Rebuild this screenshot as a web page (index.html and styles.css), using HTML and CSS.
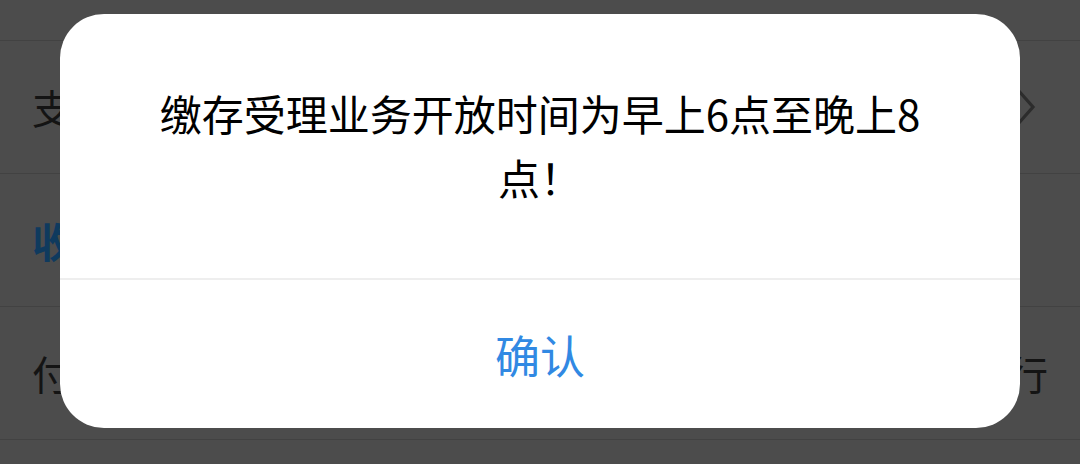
FILE: index.html
```html
<!DOCTYPE html>
<html lang="zh-CN">
<head>
<meta charset="utf-8">
<title>提示</title>
<link rel="stylesheet" href="styles.css">
</head>
<body>
<div class="page">
  <div class="row stub"></div>
  <div class="row">
    <span class="label">支取方式</span>
    <svg class="chevron" width="20" height="38" viewBox="0 0 20 38"><path d="M2 2 L17 19 L2 36" fill="none" stroke="#2c2c2c" stroke-width="3.2"/></svg>
  </div>
  <div class="row">
    <span class="label section">收款人信息</span>
  </div>
  <div class="row">
    <span class="label">付款银行</span>
    <span class="value">中国建设银行</span>
  </div>
  <div class="row rest"></div>
</div>
<div class="dialog">
  <div class="message">缴存受理业务开放时间为早上6点至晚上8点！</div>
  <div class="actions">
    <button class="confirm">确认</button>
  </div>
</div>
</body>
</html>
```

FILE: styles.css
```css
html, body {
  margin: 0;
  padding: 0;
  width: 1080px;
  height: 464px;
  overflow: hidden;
  background: #4c4c4c;
  font-family: "Noto Sans CJK SC", "Noto Sans", sans-serif;
}

.page {
  display: flex;
  flex-direction: column;
  height: 464px;
  overflow: hidden;
}

.row {
  flex: none;
  height: 132px;
  border-bottom: 1px solid #424242;
  display: flex;
  align-items: center;
  justify-content: space-between;
  padding: 0 32px 0 32px;
}

.row.stub {
  height: 40px;
}

.row.rest {
  height: 22px;
  border-bottom: none;
}

.label {
  font-size: 40px;
  color: #141414;
}

.label.section {
  color: #0f3a5e;
  font-weight: 700;
  font-size: 41px;
}

.value {
  font-size: 40px;
  color: #141414;
}

.chevron {
  margin-right: 12px;
}

.dialog {
  position: absolute;
  left: 60px;
  top: 14px;
  width: 960px;
  height: 414px;
  background: #ffffff;
  border-radius: 44px;
  display: flex;
  flex-direction: column;
  overflow: hidden;
}

.message {
  height: 266px;
  box-sizing: border-box;
  padding: 67px 96px 0 96px;
  text-align: center;
  font-size: 42px;
  line-height: 64px;
  color: #000000;
  border-bottom: 2px solid #eeeeee;
}

.actions {
  flex: 1;
  display: flex;
  align-items: center;
  justify-content: center;
}

.confirm {
  border: none;
  background: none;
  padding: 0;
  font-family: "Noto Sans CJK SC", "Noto Sans", sans-serif;
  font-size: 45px;
  color: #3189e3;
}
```
